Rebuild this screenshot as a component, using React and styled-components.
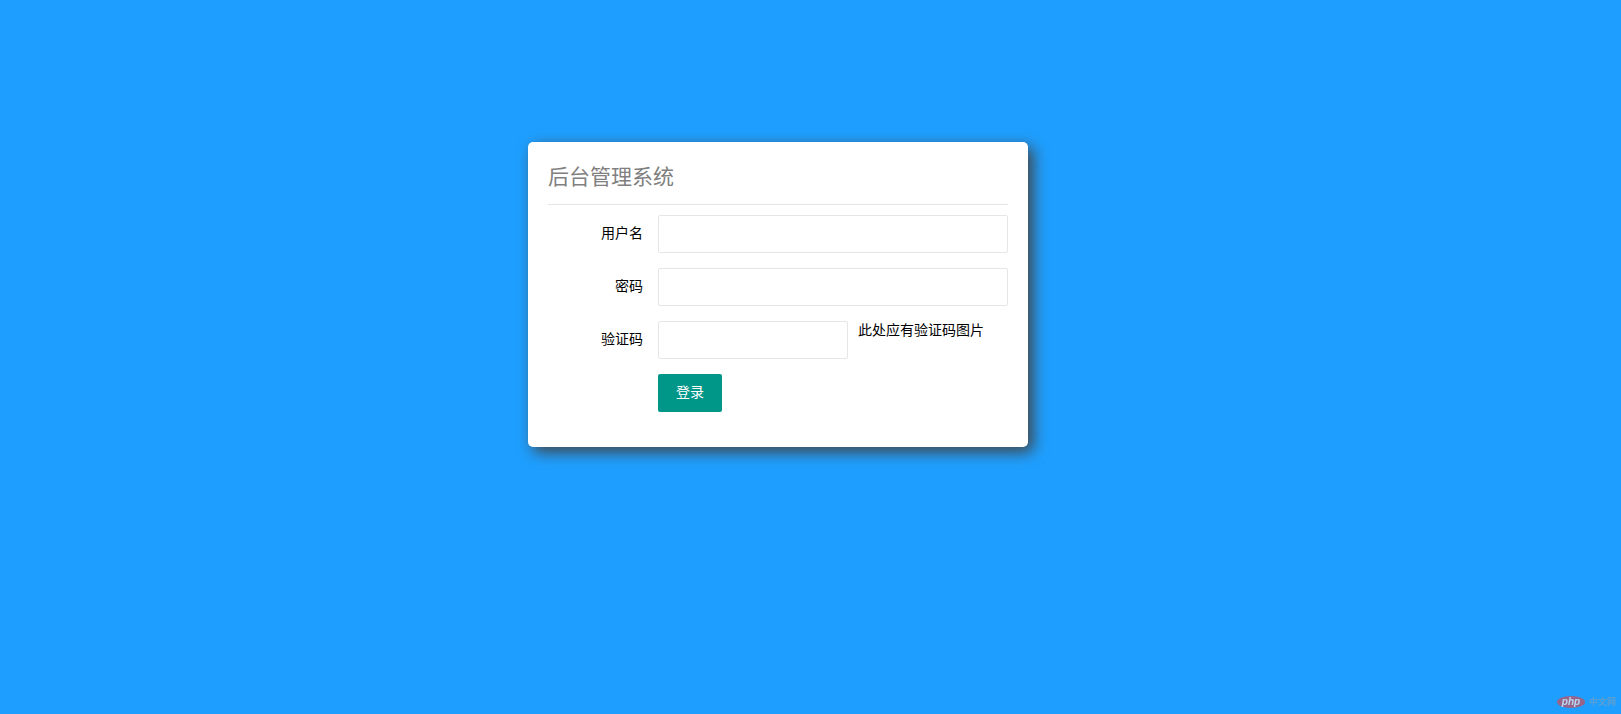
import React from "react";
import styled, { createGlobalStyle } from "styled-components";

const Global = createGlobalStyle`
  html, body { margin: 0; padding: 0; }
  body {
    background: #1e9fff;
    font-family: "Liberation Sans", "Noto Sans CJK SC", sans-serif;
    font-size: 14px;
    color: #000;
  }
`;

const Page = styled.main`
  box-sizing: border-box;
  height: 714px;
  overflow: hidden;
  padding: 142px 0 0 528px;
`;

const Card = styled.form`
  box-sizing: border-box;
  width: 500px;
  height: 305px;
  padding: 20px 20px 0;
  background: #fff;
  border-radius: 5px;
  box-shadow: 5px 5px 15px #444;
`;

const Title = styled.h1`
  margin: 0;
  height: 32px;
  font-size: 21px;
  font-weight: 400;
  line-height: 30px;
  color: #808080;
`;

const Rule = styled.hr`
  height: 1px;
  margin: 10px 0;
  border: 0;
  background: #e6e6e6;
`;

const Row = styled.div`
  display: flex;
  align-items: flex-start;
  height: 38px;
  margin-bottom: 15px;
`;

const Label = styled.label`
  box-sizing: border-box;
  width: 110px;
  padding: 8px 15px 10px;
  line-height: 20px;
  text-align: right;
`;

const Input = styled.input`
  box-sizing: border-box;
  display: block;
  width: ${(p) => p.$width}px;
  height: 38px;
  padding: 0 10px;
  background: #fff;
  border: 1px solid #e6e6e6;
  border-radius: 2px;
  outline: none;
`;

const Hint = styled.span`
  margin: -1px 0 0 10px;
  line-height: 20px;
`;

const Submit = styled.button`
  display: block;
  height: 38px;
  margin-left: 110px;
  padding: 0 18px 2px;
  background: #009688;
  border: 0;
  border-radius: 2px;
  color: #fff;
  font: inherit;
  line-height: 36px;
`;

const Watermark = styled.div`
  position: fixed;
  right: 5px;
  bottom: 6px;
  display: flex;
  align-items: center;
  gap: 4px;
  opacity: 0.8;
`;

const WatermarkText = styled.span`
  font-size: 9px;
  font-weight: 700;
  line-height: 11px;
  color: #6f9fc6;
`;

const PhpLogo = () => (
  <svg width="28" height="12" viewBox="0 0 28 12" aria-hidden="true">
    <ellipse cx="14" cy="6" rx="14" ry="6" fill="#b8566c" />
    <text x="14" y="9" textAnchor="middle" fontSize="10" fontStyle="italic" fontWeight="700" fontFamily="Liberation Sans, sans-serif" fill="#dfe6ee">php</text>
  </svg>
);

export default function App() {
  return (
    <Page>
      <Global />
      <Card onSubmit={(e) => e.preventDefault()}>
        <Title>后台管理系统</Title>
        <Rule />
        <Row>
          <Label>用户名</Label>
          <Input $width={350} />
        </Row>
        <Row>
          <Label>密码</Label>
          <Input $width={350} type="password" />
        </Row>
        <Row>
          <Label>验证码</Label>
          <Input $width={190} />
          <Hint>此处应有验证码图片</Hint>
        </Row>
        <Submit type="submit">登录</Submit>
      </Card>
      <Watermark>
        <PhpLogo />
        <WatermarkText>中文网</WatermarkText>
      </Watermark>
    </Page>
  );
}
